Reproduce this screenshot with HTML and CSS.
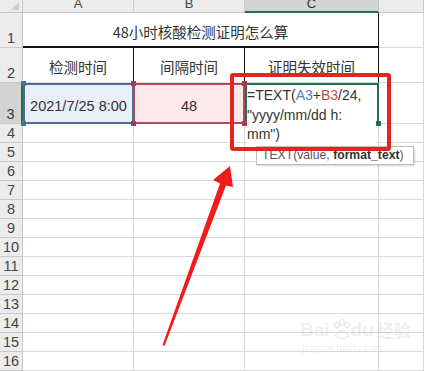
FILE: index.html
```html
<!DOCTYPE html>
<html lang="zh-CN">
<head>
<meta charset="utf-8">
<title>48小时核酸检测证明怎么算</title>
<link rel="stylesheet" href="styles.css">
</head>
<body>
<div class="stage">
  <div class="sheet">
    <div class="corner"><span class="tri"></span></div>
    <div class="colh"><span>A</span></div>
    <div class="colh"><span>B</span></div>
    <div class="colh sel"><span>C</span></div>
    <div class="colh"></div>

    <div class="rowh tall">1</div>
    <div class="title cn">48小时核酸检测证明怎么算</div>
    <div class="c"></div>

    <div class="rowh tall">2</div>
    <div class="c head cn">检测时间</div>
    <div class="c head cn">间隔时间</div>
    <div class="c head cn">证明失效时间</div>
    <div class="c"></div>

    <div class="rowh tall sel">3</div>
    <div class="c a3">2021/7/25 8:00
      <span class="hd bl tl"></span><span class="hd bl bl2"></span>
    </div>
    <div class="c b3">48
      <span class="hd rd tl"></span><span class="hd rd tr"></span><span class="hd rd bl2"></span><span class="hd rd br"></span>
    </div>
    <div class="c c3">
      <div class="edit">=TEXT(<span class="ra">A3</span>+<span class="rb">B3</span>/24,<br>"yyyy/mm/dd h:<br>mm")</div>
      <span class="hd gr br"></span>
    </div>
    <div class="c"></div>

    <div class="rowh">4</div><div class="c"></div><div class="c"></div><div class="c"></div><div class="c"></div>
    <div class="rowh">5</div><div class="c"></div><div class="c"></div><div class="c"></div><div class="c"></div>
    <div class="rowh">6</div><div class="c"></div><div class="c"></div><div class="c"></div><div class="c"></div>
    <div class="rowh">7</div><div class="c"></div><div class="c"></div><div class="c"></div><div class="c"></div>
    <div class="rowh">8</div><div class="c"></div><div class="c"></div><div class="c"></div><div class="c"></div>
    <div class="rowh">9</div><div class="c"></div><div class="c"></div><div class="c"></div><div class="c"></div>
    <div class="rowh">10</div><div class="c"></div><div class="c"></div><div class="c"></div><div class="c"></div>
    <div class="rowh">11</div><div class="c"></div><div class="c"></div><div class="c"></div><div class="c"></div>
    <div class="rowh">12</div><div class="c"></div><div class="c"></div><div class="c"></div><div class="c"></div>
    <div class="rowh">13</div><div class="c"></div><div class="c"></div><div class="c"></div><div class="c"></div>
    <div class="rowh">14</div><div class="c"></div><div class="c"></div><div class="c"></div><div class="c"></div>
    <div class="rowh">15</div><div class="c"></div><div class="c"></div><div class="c"></div><div class="c"></div>
    <div class="rowh">16</div><div class="c"></div><div class="c"></div><div class="c"></div><div class="c"></div>
  </div>

  <div class="tip">TEXT(value, <b>format_text</b>)</div>
  <div class="redbox"></div>

  <svg class="arrow" width="424" height="371" viewBox="0 0 424 371">
    <polygon points="230,166 233,187 226,185.5 164.5,346 162.5,345 220,183.5 213,180" fill="#f01c1c"/>
  </svg>

  <div class="wm">
    <div class="wm-top"><span>Bai</span>
      <svg class="paw" width="22" height="22" viewBox="0 0 22 22">
        <ellipse cx="6" cy="6" rx="2.5" ry="3" fill="none" stroke="#e2e2e2"/>
        <ellipse cx="11" cy="3.5" rx="2.5" ry="3" fill="none" stroke="#e2e2e2"/>
        <ellipse cx="16" cy="6" rx="2.5" ry="3" fill="none" stroke="#e2e2e2"/>
        <path d="M4 17 Q11 6 18 17 Q11 22 4 17 Z" fill="none" stroke="#e2e2e2"/>
      </svg>
      <span>du</span><span class="cn">经验</span></div>
    <div class="wm-url">jingyan.baidu.com</div>
  </div>
</div>
</body>
</html>
```

FILE: styles.css
```css
html, body {
  margin: 0;
  padding: 0;
  background: #ffffff;
}

body {
  font-family: "Liberation Sans", "Noto Sans CJK SC", sans-serif;
  color: #333333;
  overflow: hidden;
}

.cn {
  font-family: "Noto Sans CJK SC", sans-serif;
}

.stage {
  position: relative;
  width: 424px;
  height: 371px;
  overflow: hidden;
}

.sheet {
  display: grid;
  grid-template-columns: 23px 111px 111px 134px 45px;
  grid-template-rows: 13px 35px 35px 41px repeat(13, 19px);
}

.sheet > div {
  box-sizing: border-box;
  border-right: 1px solid #d9d9d9;
  border-bottom: 1px solid #d9d9d9;
}

/* headers */
.sheet > .corner,
.sheet > .colh,
.sheet > .rowh {
  background: #ececec;
  border-right-color: #c8c8c8;
  border-bottom-color: #c8c8c8;
  color: #444444;
}

.corner {
  position: relative;
}

.tri {
  position: absolute;
  right: 3px;
  bottom: 2px;
  width: 0;
  height: 0;
  border-left: 8px solid transparent;
  border-bottom: 8px solid #cdcdcd;
}

.colh {
  display: flex;
  justify-content: center;
  overflow: hidden;
  font-size: 13px;
  line-height: 13px;
}

.colh span {
  margin-top: -3px;
}

.sheet > .colh.sel {
  background: #d3d3d3;
  border-bottom: 2px solid #217346;
  color: #333333;
}

.rowh {
  display: flex;
  align-items: flex-end;
  justify-content: center;
  font-size: 14.5px;
  line-height: 15px;
  padding-bottom: 1px;
}

.sheet > .rowh.sel {
  background: #d3d3d3;
  border-right: 2px solid #217346;
  color: #333333;
}

/* cells */
.title {
  grid-column: span 3;
  display: flex;
  align-items: center;
  justify-content: center;
  padding-top: 3px;
  font-size: 14.5px;
  color: #333333;
}

.sheet > .title {
  border-bottom: 2px solid #111111;
  border-right: 1px solid #111111;
}

.head {
  display: flex;
  align-items: center;
  justify-content: center;
  padding-top: 3px;
  font-size: 14.5px;
}

.sheet > .head {
  border-right-color: #111111;
}

.a3, .b3 {
  position: relative;
  display: flex;
  align-items: center;
  justify-content: center;
  padding-top: 5px;
  font-size: 14.5px;
  color: #333333;
}

.sheet > .a3 {
  background: #e9eff8;
  border: 2px solid #4a6f97;
}

.sheet > .b3 {
  background: #fbe9eb;
  border: 2px solid #ad4a5b;
  margin-left: -1px;
}

.sheet > .c3 {
  position: relative;
  border: 2px solid #217346;
  border-bottom-color: transparent;
}

.edit {
  position: absolute;
  left: 0;
  top: 0;
  right: 0;
  height: 61px;
  background: #ffffff;
  padding-top: 1px;
  font-size: 14px;
  line-height: 19.5px;
  color: #333333;
  white-space: nowrap;
  z-index: 1;
}

.ra { color: #4f81bd; }
.rb { color: #c0504d; }

/* selection handles */
.hd {
  position: absolute;
  width: 5px;
  height: 5px;
  z-index: 2;
}
.hd.bl { background: #4a6f97; }
.hd.rd { background: #ad3a50; }
.hd.gr { background: #217346; }
.hd.tl { left: -4px; top: -4px; }
.hd.tr { right: -4px; top: -4px; }
.hd.bl2 { left: -4px; bottom: -4px; }
.hd.br { right: -4px; bottom: -4px; }

/* overlays */
.tip {
  position: absolute;
  left: 256px;
  top: 146px;
  width: 158px;
  height: 19px;
  box-sizing: border-box;
  border: 1px solid #bdbdbd;
  background: #ffffff;
  box-shadow: 1px 1px 2px rgba(0, 0, 0, 0.18);
  padding-left: 5px;
  font-size: 12.2px;
  line-height: 17px;
  color: #555555;
  white-space: nowrap;
  z-index: 3;
}

.tip b {
  color: #333333;
}

.redbox {
  position: absolute;
  left: 230px;
  top: 73px;
  width: 161px;
  height: 78px;
  box-sizing: border-box;
  border: 4px solid #e0261f;
  border-radius: 3px;
  z-index: 4;
}

.arrow {
  position: absolute;
  left: 0;
  top: 0;
  z-index: 5;
}

.wm {
  position: absolute;
  left: 300px;
  top: 318px;
  white-space: nowrap;
  color: rgba(200, 200, 200, 0.3);
  z-index: 2;
}

.wm-top {
  display: flex;
  align-items: flex-end;
  font-size: 19px;
  font-weight: bold;
  line-height: 24px;
}

.wm-top .cn {
  font-size: 17px;
  margin-left: 3px;
}

.paw {
  margin: 0 -2px 1px 1px;
}

.wm-url {
  font-size: 10px;
  line-height: 14px;
  padding-left: 2px;
}
```
